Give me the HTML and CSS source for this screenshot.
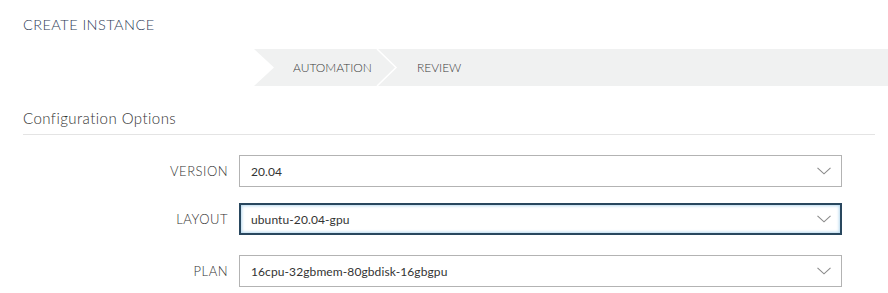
FILE: index.html
```html
<!DOCTYPE html>
<html>
<head>
<meta charset="utf-8">
<link rel="stylesheet" href="styles.css">
</head>
<body>
<div class="page">
  <h1 class="title">CREATE INSTANCE</h1>
  <div class="steps">
    <svg class="notch" width="21" height="37" viewBox="0 0 21 37"><polygon points="0,0 20,18.5 0,37" fill="#ffffff"/></svg>
    <span class="step step-first">AUTOMATION</span>
    <svg class="sep" width="22" height="37" viewBox="0 0 22 37"><polyline points="1,0 20,18.5 1,37" fill="none" stroke="#ffffff" stroke-width="1.5"/></svg>
    <span class="step">REVIEW</span>
  </div>
  <h2 class="section">Configuration Options</h2>
  <div class="form">
    <div class="row row-1">
      <label class="label">VERSION</label>
      <div class="select">
        <span class="value">20.04</span>
        <svg class="caret" width="14" height="8" viewBox="0 0 14 8"><polyline points="0.5,0.8 7,6.8 13.5,0.8" fill="none" stroke="#8a8a8a" stroke-width="1.1"/></svg>
      </div>
    </div>
    <div class="row row-2">
      <label class="label">LAYOUT</label>
      <div class="select focused">
        <span class="value">ubuntu-20.04-gpu</span>
        <svg class="caret" width="14" height="8" viewBox="0 0 14 8"><polyline points="0.5,0.8 7,6.8 13.5,0.8" fill="none" stroke="#8a8a8a" stroke-width="1.1"/></svg>
      </div>
    </div>
    <div class="row row-3">
      <label class="label">PLAN</label>
      <div class="select">
        <span class="value">16cpu-32gbmem-80gbdisk-16gbgpu</span>
        <svg class="caret" width="14" height="8" viewBox="0 0 14 8"><polyline points="0.5,0.8 7,6.8 13.5,0.8" fill="none" stroke="#8a8a8a" stroke-width="1.1"/></svg>
      </div>
    </div>
  </div>
</div>
</body>
</html>
```
FILE: styles.css
```css
* { box-sizing: border-box; }
html, body { margin: 0; padding: 0; background: #ffffff; }
body {
  font-family: Lato, "Open Sans", "Liberation Sans", sans-serif;
  font-weight: 300;
  color: #333333;
  width: 888px;
  height: 293px;
  overflow: hidden;
}
.page { display: flex; flex-direction: column; }
.title {
  margin: 0;
  padding: 15px 0 0 23px;
  height: 49px;
  font-size: 14.5px;
  font-weight: 300;
  color: #2f4058;
  line-height: 20px;
  letter-spacing: 0.45px;
}
.steps {
  margin-left: 254px;
  height: 37px;
  background: #f0f1f1;
  display: flex;
  align-items: center;
}
.notch { display: block; flex: none; }
.sep { display: block; flex: none; margin-left: 4px; margin-right: 19px; }
.step {
  font-size: 12px;
  color: #3c3c3c;
  letter-spacing: 0;
}
.step-first { margin-left: 18px; }
.section {
  margin: 23px 13px 0 23px;
  padding-bottom: 6px;
  border-bottom: 1px solid #e4e4e4;
  font-size: 15px;
  font-weight: 300;
  color: #333333;
  line-height: 19px;
  letter-spacing: 0.45px;
}
.form { display: flex; flex-direction: column; }
.row {
  display: flex;
  align-items: center;
}
.row-1 { margin-top: 20px; }
.row-2 { margin-top: 16px; }
.row-3 { margin-top: 20px; }
.label {
  width: 229px;
  text-align: right;
  padding-right: 1px;
  font-size: 13px;
  color: #333333;
  letter-spacing: 0.5px;
}
.select {
  margin-left: 10px;
  width: 603px;
  height: 32px;
  border: 1px solid #b3b3b3;
  background: #ffffff;
  display: flex;
  align-items: center;
  justify-content: space-between;
  padding: 0 10px 0 11px;
}
.select.focused {
  border: 2px solid #29475e;
  box-shadow: inset 0 0 3px 1px #b6d8ee;
  padding-left: 10px;
  padding-right: 9px;
}
.value {
  font-size: 12px;
  font-weight: 400;
  color: #333333;
  letter-spacing: 0.1px;
}
.caret { display: block; flex: none; }
```
